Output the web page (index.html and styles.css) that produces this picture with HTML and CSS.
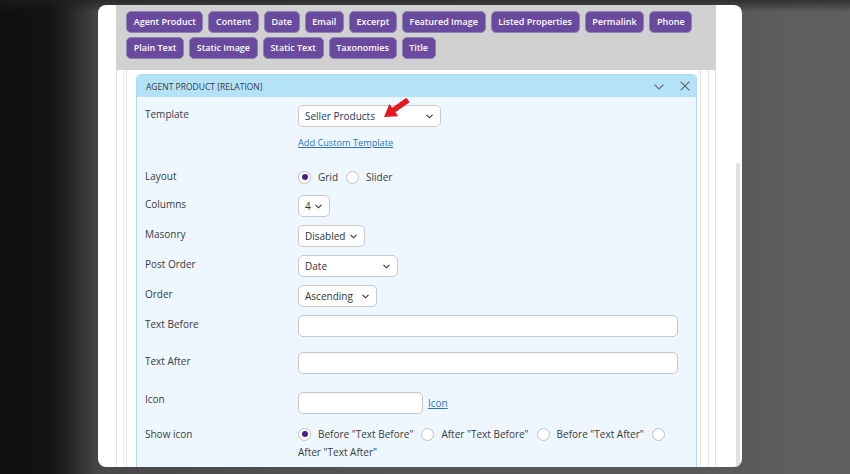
FILE: index.html
```html
<!DOCTYPE html>
<html lang="en">
<head>
<meta charset="utf-8">
<title>Agent Product [Relation]</title>
<link rel="stylesheet" href="styles.css">
</head>
<body>
<div class="backdrop">
  <div class="modal">
    <div class="content">
      <div class="fields-bar">
        <button class="field-btn">Agent Product</button>
        <button class="field-btn">Content</button>
        <button class="field-btn">Date</button>
        <button class="field-btn">Email</button>
        <button class="field-btn">Excerpt</button>
        <button class="field-btn">Featured Image</button>
        <button class="field-btn">Listed Properties</button>
        <button class="field-btn">Permalink</button>
        <button class="field-btn">Phone</button>
        <button class="field-btn">Plain Text</button>
        <button class="field-btn">Static Image</button>
        <button class="field-btn">Static Text</button>
        <button class="field-btn">Taxonomies</button>
        <button class="field-btn">Title</button>
      </div>
      <div class="frame-outer">
        <div class="frame-mid">
          <div class="frame-inner">
            <div class="panel">
              <div class="panel-head">
                <span class="panel-title">Agent Product [Relation]</span>
                <span class="panel-actions">
                  <svg class="icon-chevron" width="10" height="6" viewBox="0 0 10 6"><path d="M0.5 0.6 L5 5 L9.5 0.6" fill="none" stroke="#666" stroke-width="1.2"/></svg>
                  <svg class="icon-close" width="10" height="10" viewBox="0 0 10 10"><path d="M0.6 0.6 L9.4 9.4 M9.4 0.6 L0.6 9.4" fill="none" stroke="#666" stroke-width="1.2"/></svg>
                </span>
              </div>
              <div class="panel-body">
                <div class="row row-template">
                  <div class="label">Template</div>
                  <div class="control control-template">
                    <div class="select w-template seller"><span>Seller Products</span><svg class="chev" width="7" height="5" viewBox="0 0 7 5"><path d="M0.5 0.8 L3.5 3.8 L6.5 0.8" fill="none" stroke="#333" stroke-width="1.1"/></svg></div>
                    <a class="link link-small" href="#">Add Custom Template</a>
                    <svg class="annot-arrow" width="34" height="26" viewBox="0 0 34 26"><polygon points="4,22 18.13,21.18 15.41,17.34 29.62,7.28 26.38,2.72 12.17,12.78 9.46,8.94" fill="#e3191f"/></svg>
                  </div>
                </div>
                <div class="row row-layout">
                  <div class="label">Layout</div>
                  <div class="control radios"><i class="radio checked"></i><span class="opt">Grid</span><i class="radio"></i><span class="opt">Slider</span></div>
                </div>
                <div class="row">
                  <div class="label">Columns</div>
                  <div class="control">
                    <div class="select w-columns"><span>4</span><svg class="chev" width="7" height="5" viewBox="0 0 7 5"><path d="M0.5 0.8 L3.5 3.8 L6.5 0.8" fill="none" stroke="#333" stroke-width="1.1"/></svg></div>
                  </div>
                </div>
                <div class="row">
                  <div class="label">Masonry</div>
                  <div class="control">
                    <div class="select w-masonry"><span>Disabled</span><svg class="chev" width="7" height="5" viewBox="0 0 7 5"><path d="M0.5 0.8 L3.5 3.8 L6.5 0.8" fill="none" stroke="#333" stroke-width="1.1"/></svg></div>
                  </div>
                </div>
                <div class="row">
                  <div class="label">Post Order</div>
                  <div class="control">
                    <div class="select w-postorder"><span>Date</span><svg class="chev" width="7" height="5" viewBox="0 0 7 5"><path d="M0.5 0.8 L3.5 3.8 L6.5 0.8" fill="none" stroke="#333" stroke-width="1.1"/></svg></div>
                  </div>
                </div>
                <div class="row">
                  <div class="label">Order</div>
                  <div class="control">
                    <div class="select w-order"><span>Ascending</span><svg class="chev" width="7" height="5" viewBox="0 0 7 5"><path d="M0.5 0.8 L3.5 3.8 L6.5 0.8" fill="none" stroke="#333" stroke-width="1.1"/></svg></div>
                  </div>
                </div>
                <div class="row row-text-before">
                  <div class="label">Text Before</div>
                  <div class="control"><input class="input w-full" type="text"></div>
                </div>
                <div class="row row-text-after">
                  <div class="label">Text After</div>
                  <div class="control"><input class="input w-full" type="text"></div>
                </div>
                <div class="row row-icon">
                  <div class="label label-icon">Icon</div>
                  <div class="control control-icon"><input class="input w-icon" type="text"><a class="link" href="#">Icon</a></div>
                </div>
                <div class="row">
                  <div class="label">Show icon</div>
                  <div class="control radios radios-wrap"><i class="radio checked"></i><span class="opt">Before "Text Before"</span><i class="radio"></i><span class="opt">After "Text Before"</span><i class="radio"></i><span class="opt">Before "Text After"</span><i class="radio"></i><span class="opt">After "Text After"</span></div>
                </div>
              </div>
            </div>
          </div>
        </div>
      </div>
    </div>
    <div class="scroll-track"><div class="scroll-thumb"></div></div>
  </div>
</div>
</body>
</html>
```

FILE: styles.css
```css
html, body {
  margin: 0;
  padding: 0;
}

body {
  width: 850px;
  height: 474px;
  overflow: hidden;
  font-family: "Open Sans", "DejaVu Sans", sans-serif;
  background:
    linear-gradient(180deg, rgba(30, 30, 30, 0.7) 0px, rgba(30, 30, 30, 0.5) 4px, rgba(30, 30, 30, 0) 12px),
    linear-gradient(90deg, #0d0f10 0px, #111314 48px, #1f2122 66px, #363738 84px, #474747 98px, #555555 400px, #595959 742px, #5d5d5d 780px, #606060 850px);
}

.backdrop {
  padding: 5px 0 0 98px;
}

.modal {
  width: 644px;
  height: 462px;
  background: #ffffff;
  border-radius: 8px;
  overflow: hidden;
  display: flex;
}

.content {
  width: 600px;
  margin-left: 18px;
  display: flex;
  flex-direction: column;
}

/* field buttons */
.fields-bar {
  background: #d1d1d1;
  padding: 6px 10px 11px 10px;
  display: flex;
  flex-wrap: wrap;
  gap: 4px 5px;
}

.field-btn {
  font-family: "Open Sans", sans-serif;
  font-size: 9px;
  font-weight: 600;
  line-height: 20px;
  color: #ffffff;
  background: #694a9e;
  border: 1px solid #8f82b0;
  border-radius: 5px;
  padding: 0 6.7px;
  margin: 0;
  cursor: pointer;
}

/* nested frames */
.frame-outer {
  flex: 1;
  display: flex;
  border-left: 1px solid #e3e3e3;
  border-right: 1px solid #e3e3e3;
  padding: 0 6px;
}

.frame-mid {
  flex: 1;
  display: flex;
  border-left: 1px solid #ececec;
  border-right: 1px solid #e6e6e6;
  padding: 0 7px 0 2px;
}

.frame-inner {
  flex: 1;
  border-left: 1px solid #e6e6e6;
  border-right: 1px solid #e6e6e6;
  padding: 4px 3px 0 9px;
  display: flex;
  flex-direction: column;
}

/* panel */
.panel {
  flex: 1;
  display: flex;
  flex-direction: column;
  border: 1px solid #aadcf5;
  border-bottom: none;
  border-radius: 5px 5px 0 0;
  overflow: hidden;
}

.panel-head {
  height: 22px;
  background: #b4e3f9;
  display: flex;
  align-items: center;
  justify-content: space-between;
  padding: 0 6px 0 9px;
}

.panel-title {
  font-size: 8.5px;
  text-transform: uppercase;
  color: #3a3a3a;
}

.panel-actions {
  display: flex;
  align-items: center;
  gap: 16px;
}

.icon-chevron {
  display: block;
  margin-top: 2px;
}

.icon-close {
  display: block;
}

.panel-body {
  flex: 1;
  background: #eef7ff;
  padding: 8px 8px 0 8px;
}

/* rows */
.row {
  display: flex;
  align-items: flex-start;
  margin-bottom: 8px;
}

.row-template {
  margin-bottom: 16px;
}

.row-text-before {
  margin-bottom: 15px;
}

.row-text-after {
  margin-bottom: 18px;
}

.row-icon {
  margin-bottom: 11px;
}

.label {
  width: 153px;
  flex: none;
  font-size: 10px;
  line-height: 15px;
  padding-top: 2px;
  color: #3a3a3a;
}

.row-layout .label {
  padding-top: 3px;
}

.label-icon {
  padding-top: 0;
}

.control {
  flex: 1;
  min-width: 0;
}

.control-template {
  position: relative;
  display: flex;
  flex-direction: column;
  align-items: flex-start;
}

.annot-arrow {
  position: absolute;
  left: 82px;
  top: -10px;
}

/* selects */
.select {
  box-sizing: border-box;
  height: 22px;
  display: flex;
  align-items: center;
  justify-content: space-between;
  background: #ffffff;
  border: 1px solid #c9c9c9;
  border-radius: 5px;
  padding: 0 7px 0 6px;
  font-size: 10px;
  color: #333333;
}

.select .chev {
  display: block;
  flex: none;
}

.seller {
  color: #24395a;
}

.w-template { width: 143px; }
.w-columns { width: 32px; }
.w-masonry { width: 67px; }
.w-postorder { width: 100px; }
.w-order { width: 79px; }

/* links */
.link {
  color: #2b73c0;
  text-decoration: underline;
  font-size: 10px;
}

.link-small {
  font-size: 9.2px;
  line-height: 14px;
  margin-top: 9px;
}

/* inputs */
.input {
  box-sizing: border-box;
  height: 22px;
  background: #ffffff;
  border: 1px solid #c6c6c6;
  border-radius: 5px;
  box-shadow: inset 0 1px 1px rgba(0, 0, 0, 0.04);
  margin: 0;
  padding: 0 6px;
  font-family: "Open Sans", sans-serif;
  font-size: 10px;
  display: block;
}

.w-full { width: 380px; }
.w-icon { width: 125px; }

.control-icon {
  display: flex;
  align-items: center;
  gap: 5px;
}

/* radios */
.radios {
  font-size: 10px;
  line-height: 20px;
  color: #3a3a3a;
}

.row-layout .radios {
  padding-top: 1px;
}

.radios-wrap {
  line-height: 18px;
  max-width: 389px;
}

.radio {
  display: inline-block;
  position: relative;
  box-sizing: border-box;
  width: 13px;
  height: 13px;
  border: 1px solid #bfbfbf;
  border-radius: 50%;
  background: #ffffff;
  vertical-align: middle;
  margin: -2px 7px 0 0;
}

.radio.checked::after {
  content: "";
  position: absolute;
  left: 2.5px;
  top: 2.5px;
  width: 6px;
  height: 6px;
  border-radius: 50%;
  background: #4c1f8b;
}

.opt {
  white-space: nowrap;
  margin-right: 8px;
}

/* scrollbar */
.scroll-track {
  width: 4px;
  margin-left: 20px;
  padding-top: 158px;
}

.scroll-thumb {
  height: 320px;
  background: #e1e1e1;
  border-radius: 2px;
}
```
